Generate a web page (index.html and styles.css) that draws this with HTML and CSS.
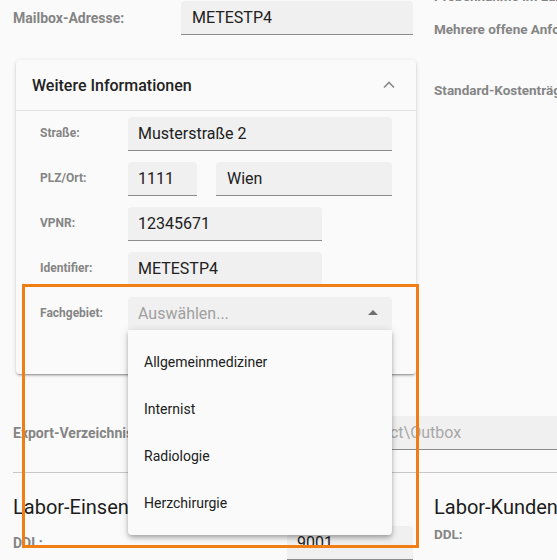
FILE: index.html
```html
<!DOCTYPE html>
<html lang="de">
<head>
    <meta charset="UTF-8">
    <meta name="viewport" content="width=device-width, initial-scale=1.0">
    <title>Labor-Einstellungen</title>
    <link rel="stylesheet" href="styles.css">
</head>
<body>
    <div class="page">
        <div class="columns">
            <div class="col-left">
                <div class="row">
                    <label class="label">Mailbox-Adresse:</label>
                    <div class="field mailbox"><span>METESTP4</span></div>
                </div>

                <!-- Ausklappbarer Bereich -->
                <div class="card">
                    <div class="card-header">
                        <span>Weitere Informationen</span>
                        <svg class="chevron" width="12" height="8" viewBox="0 0 12 8">
                            <polyline points="1,6.5 6,1.5 11,6.5" fill="none" stroke="#8a8a8a" stroke-width="1.6"/>
                        </svg>
                    </div>
                    <div class="card-body">
                        <div class="card-row">
                            <label class="small-label">Straße:</label>
                            <div class="field wide"><span>Musterstraße 2</span></div>
                        </div>
                        <div class="card-row">
                            <label class="small-label">PLZ/Ort:</label>
                            <div class="field plz"><span>1111</span></div>
                            <div class="field ort"><span>Wien</span></div>
                        </div>
                        <div class="card-row">
                            <label class="small-label">VPNR:</label>
                            <div class="field medium"><span>12345671</span></div>
                        </div>
                        <div class="card-row">
                            <label class="small-label">Identifier:</label>
                            <div class="field medium"><span>METESTP4</span></div>
                        </div>
                        <div class="card-row">
                            <label class="small-label">Fachgebiet:</label>
                            <div class="field wide select">
                                <span class="placeholder">Auswählen...</span>
                                <span class="arrow"></span>
                                <ul class="options">
                                    <li>Allgemeinmediziner</li>
                                    <li>Internist</li>
                                    <li>Radiologie</li>
                                    <li>Herzchirurgie</li>
                                </ul>
                            </div>
                        </div>
                    </div>
                </div>
            </div>

            <div class="col-right">
                <p class="label cut">Probennahme im Labor:</p>
                <p class="label">Mehrere offene Anforderungen erlauben:</p>
                <p class="label kosten">Standard-Kostenträger:</p>
            </div>
        </div>

        <div class="row export">
            <label class="label">Export-Verzeichnis:</label>
            <div class="field export-field"><span class="muted">C:\Labordaten\Export\Project\Outbox</span></div>
        </div>

        <div class="columns section">
            <div class="col-left">
                <h2>Labor-Einsender</h2>
                <div class="row">
                    <label class="label ddl">DDL:</label>
                    <div class="field ddl-field"><span>9001</span></div>
                </div>
            </div>
            <div class="col-right">
                <h2>Labor-Kundendaten</h2>
                <div class="row">
                    <label class="label">DDL:</label>
                </div>
            </div>
        </div>

        <div class="highlight"></div>
    </div>
</body>
</html>
```

FILE: styles.css
```css
body {
    margin: 0;
    padding: 0;
    background-color: #fafafa;
    font-family: Roboto, "Noto Sans", Arial, sans-serif;
    color: #212121;
    overflow: hidden;
}

.page {
    position: relative;
    width: 557px;
    height: 560px;
    padding-left: 13px;
    box-sizing: border-box;
    overflow: hidden;
    white-space: nowrap;
}

.columns {
    display: grid;
    grid-template-columns: 403px 300px;
    column-gap: 18px;
}

.row {
    display: flex;
    align-items: center;
}

.label {
    font-size: 14px;
    font-weight: bold;
    color: #858585;
    margin: 0;
}

.row .label {
    width: 168px;
    flex-shrink: 0;
}

.field {
    display: flex;
    align-items: center;
    height: 34px;
    box-sizing: border-box;
    padding: 0 11px;
    background-color: #f0f0f0;
    border-bottom: 1px solid #8c8c8c;
    border-radius: 4px 4px 0 0;
    font-size: 16px;
}

.mailbox {
    width: 232px;
    margin-top: 1px;
}

/* Karte "Weitere Informationen" */
.card {
    width: 400px;
    margin: 25px 0 0 3px;
    background-color: #fafafa;
    border-radius: 4px;
    box-shadow: 0 3px 1px -2px rgba(0,0,0,.2), 0 2px 2px 0 rgba(0,0,0,.14), 0 1px 5px 0 rgba(0,0,0,.12);
}

.card-header {
    display: flex;
    align-items: center;
    justify-content: space-between;
    height: 50px;
    padding: 0 21px 0 16px;
    border-bottom: 1px solid #e3e3e3;
    font-size: 16px;
    font-weight: 500;
    color: #222;
}

.card-body {
    display: flex;
    flex-direction: column;
    gap: 11px;
    padding: 6px 24px 42px;
}

.card-row {
    display: flex;
    align-items: center;
    gap: 19px;
}

.small-label {
    width: 88px;
    margin-right: -19px;
    font-size: 12px;
    font-weight: bold;
    color: #858585;
    align-self: flex-start;
    padding-top: 9px;
}

.wide {
    width: 264px;
    padding-left: 10px;
}

.plz {
    width: 69px;
    padding-left: 10px;
}

.ort {
    width: 176px;
}

.medium {
    width: 194px;
    padding-left: 10px;
}

.select {
    position: relative;
    justify-content: space-between;
    height: 35px;
    border-bottom: 2px solid #0b6fbf;
    padding-right: 14px;
}

.placeholder {
    color: #a0a0a0;
}

.arrow {
    width: 0;
    height: 0;
    border-left: 5px solid transparent;
    border-right: 5px solid transparent;
    border-bottom: 5px solid #6f6f6f;
    margin-top: -2px;
}

.options {
    position: absolute;
    top: 100%;
    left: 0;
    z-index: 2;
    width: 264px;
    margin: 0;
    padding: 9px 0 8px;
    list-style-type: none;
    background-color: #fafafa;
    border-radius: 0 0 4px 4px;
    box-shadow: 0 2px 4px -1px rgba(0,0,0,.2), 0 4px 5px 0 rgba(0,0,0,.14), 0 1px 10px 0 rgba(0,0,0,.12);
}

.options li {
    height: 47px;
    line-height: 47px;
    padding-left: 16px;
    font-size: 14px;
    color: #212121;
}

/* Rechte Spalte */
.col-right .label {
    font-size: 13.5px;
    margin-bottom: 45px;
}

.col-right .cut {
    margin-top: -12px;
    margin-bottom: 17px;
}

/* Export-Zeile */
.export {
    margin-top: 42px;
    padding-bottom: 22px;
    border-bottom: 1px solid #c8c8c8;
}

.export-field {
    width: 420px;
    flex-shrink: 0;
}

.muted {
    color: #a8a8a8;
}

/* Labor-Abschnitte */
.section h2 {
    margin: 22px 0 8px;
    font-size: 20px;
    font-weight: normal;
    line-height: 24px;
    color: #1c1c1c;
}

.section .label.ddl {
    width: 274px;
}

.section .row {
    margin-top: -1px;
}

.ddl-field {
    width: 126px;
    padding-left: 10px;
}

/* Markierung */
.highlight {
    position: absolute;
    left: 22px;
    top: 284px;
    width: 397px;
    height: 264px;
    box-sizing: border-box;
    border: 3px solid #f07e14;
    z-index: 3;
}
```
